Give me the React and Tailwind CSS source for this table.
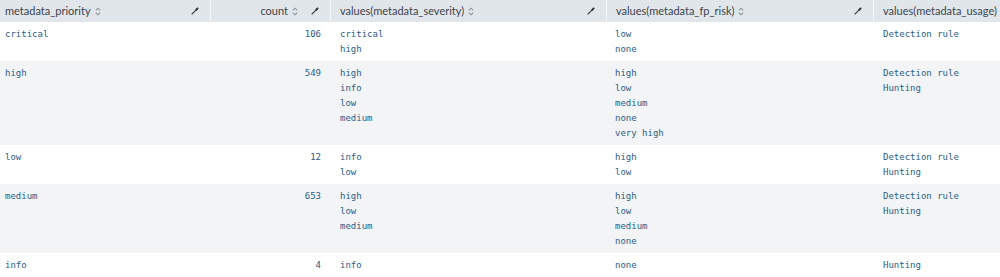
import React from "react";

const cols = [210, 120, 276, 267, 200];

const headers = [
  { label: "metadata_priority", align: "left", pencil: true },
  { label: "count", align: "right", pencil: true },
  { label: "values(metadata_severity)", align: "left", pencil: true },
  { label: "values(metadata_fp_risk)", align: "left", pencil: true },
  { label: "values(metadata_usage)", align: "left", pencil: false },
];

const rows = [
  { p: "critical", c: "106", s: ["critical", "high"], f: ["low", "none"], u: ["Detection rule"] },
  { p: "high", c: "549", s: ["high", "info", "low", "medium"], f: ["high", "low", "medium", "none", "very high"], u: ["Detection rule", "Hunting"] },
  { p: "low", c: "12", s: ["info", "low"], f: ["high", "low"], u: ["Detection rule", "Hunting"] },
  { p: "medium", c: "653", s: ["high", "low", "medium"], f: ["high", "low", "medium", "none"], u: ["Detection rule", "Hunting"] },
  { p: "info", c: "4", s: ["info"], f: ["none"], u: ["Hunting"] },
];

function SortIcon() {
  return (
    <svg width="6" height="9" viewBox="0 0 6 9" className="shrink-0">
      <path d="M0.8 3.4 L3 1.2 L5.2 3.4" fill="none" stroke="#8b949c" strokeWidth="1.1" />
      <path d="M0.8 5.6 L3 7.8 L5.2 5.6" fill="none" stroke="#8b949c" strokeWidth="1.1" />
    </svg>
  );
}

function Pencil() {
  return (
    <svg width="8" height="8" viewBox="0 0 8 8" className="shrink-0">
      <path d="M1 7 L6.2 1.8" stroke="#3c444d" strokeWidth="1.1" strokeLinecap="round" />
      <path d="M5.2 2.8 L6.6 1.4" stroke="#2b3036" strokeWidth="1.9" strokeLinecap="round" />
    </svg>
  );
}

function HeaderCell({ h, w, first }) {
  return (
    <div
      style={{ width: w }}
      className={`shrink-0 h-full flex items-center ${first ? "pl-[5px]" : "pl-[9px] border-l border-[#f4f6f7]"} pr-[11px]`}
    >
      {h.align === "right" && <div className="flex-1" />}
      <span className="whitespace-nowrap">{h.label}</span>
      <span className="ml-[4px] mt-[1px] flex"><SortIcon /></span>
      {h.align !== "right" && <div className="flex-1" />}
      {h.pencil && (
        <span className={`${h.align === "right" ? "ml-[13px]" : ""} flex`}>
          <Pencil />
        </span>
      )}
    </div>
  );
}

function Lines({ items }) {
  return (
    <div className="flex flex-col">
      {items.map((t, i) => (
        <div key={i} className="h-[15px] leading-[15px] whitespace-nowrap">{t}</div>
      ))}
    </div>
  );
}

export default function App() {
  return (
    <div className="w-[1000px] h-[277px] overflow-hidden bg-white">
      <div
        className="flex h-[22px] bg-[#e1e6eb] text-[#3c444d] text-[11px]"
        style={{ fontFamily: "Lato, 'Liberation Sans', sans-serif", width: cols.reduce((a, b) => a + b, 0) }}
      >
        {headers.map((h, i) => (
          <HeaderCell key={i} h={h} w={cols[i]} first={i === 0} />
        ))}
      </div>
      <div
        className="text-[9px] text-[#2a5d8a]"
        style={{ fontFamily: "'DejaVu Sans Mono', 'Liberation Mono', monospace" }}
      >
        {rows.map((r, i) => (
          <div key={i} className={`flex pt-[5px] pb-[4px] ${i % 2 === 1 ? "bg-[#f2f4f5]" : "bg-white"}`}>
            <div style={{ width: cols[0] }} className="shrink-0 pl-[5px]">
              <Lines items={[r.p]} />
            </div>
            <div style={{ width: cols[1] }} className="shrink-0 pr-[9px] text-right">
              <Lines items={[r.c]} />
            </div>
            <div style={{ width: cols[2] }} className="shrink-0 pl-[10px]">
              <Lines items={r.s} />
            </div>
            <div style={{ width: cols[3] }} className="shrink-0 pl-[9px]">
              <Lines items={r.f} />
            </div>
            <div style={{ width: cols[4] }} className="shrink-0 pl-[10px]">
              <Lines items={r.u} />
            </div>
          </div>
        ))}
      </div>
    </div>
  );
}
